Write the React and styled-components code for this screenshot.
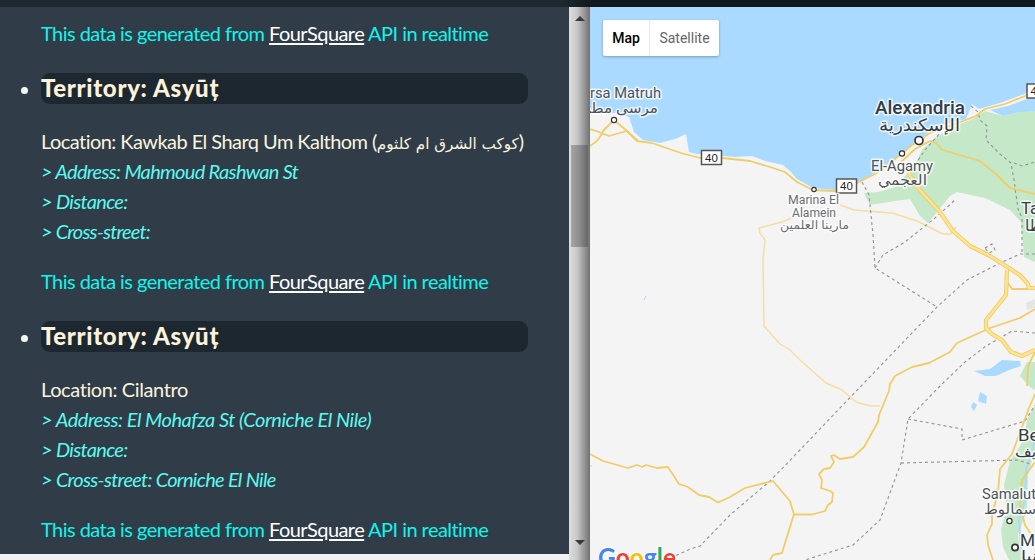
import React from "react";
import styled, { createGlobalStyle } from "styled-components";

const Global = createGlobalStyle`
  body { margin: 0; background: #f1f1f1; overflow: hidden; }
  * { box-sizing: border-box; }
`;
const Page = styled.div`
  width: 1035px; height: 560px; display: flex; flex-direction: column; overflow: hidden;
  font: 20px/30px "Gill Sans MT", "Gill Sans", Lato, "DejaVu Sans", sans-serif;
  font-variant-ligatures: none;
`;
const Header = styled.header`
  flex: 0 0 7px; background: linear-gradient(90deg, #1d2830 0 560px, #10171d 595px);
`;
const Main = styled.main` display: flex; height: 553px; `;
const Panel = styled.section`
  width: 569px; height: 547px; overflow: hidden; background: #303c48; color: #faf4df;
`;
const List = styled.ul` margin: 0; padding: 11px 41px 0; `;
const Item = styled.li`
  font-size: 20px;
  &::marker { color: #f5fbf5; }
`;
const Title = styled.h2`
  margin: 0 0 22px; height: 31px; border-radius: 9px; background: #1d272f; color: #fdf3da;
  font-size: 24px; line-height: 29px; font-weight: 900; letter-spacing: 0.68px; white-space: nowrap;
`;
const Line = styled.div`
  height: 30px; white-space: nowrap; letter-spacing: ${(p) => p.$ls || -0.55}px;
  color: ${(p) => (p.$detail ? "#5cf9f0" : "#faf4df")};
  font-style: ${(p) => (p.$detail ? "italic" : "normal")};
`;
const Source = styled.p`
  margin: ${(p) => (p.$first ? "0 0 25px" : "20px 0 25px")}; height: 30px; white-space: nowrap; color: #12f4ea;
  letter-spacing: -0.55px;
`;
const Link = styled.a` color: #fff; text-decoration: underline; text-underline-offset: 2px; `;
const Arabic = styled.span` font-family: "DejaVu Sans", sans-serif; font-size: 15.2px; letter-spacing: 0; `;
const Scrollbar = styled.div`
  width: 21px; height: 553px; display: flex; flex-direction: column; align-items: center;
  background: linear-gradient(90deg, #dedede 0, #c9c9c9 8px, #999 15px, #707070 21px);
`;
const Arrow = styled.div`
  width: 0; height: 0; border: 5px solid transparent; border-top-width: 0; border-bottom: 5px solid #383838;
  margin-top: 9px; transform: ${(p) => (p.$down ? "rotate(180deg)" : "none")};
`;
const Thumb = styled.div`
  width: 17px; height: 102px; margin: 124px 0 284px;
  background: linear-gradient(90deg, #a5a5a5, #8b8b8b 9px, #666);
`;
const MapArea = styled.section` position: relative; width: 445px; height: 553px; overflow: hidden; background: #f4f4f4; `;
const MapDrawing = styled.svg` display: block; `;
const MapTypes = styled.div`
  position: absolute; left: 13px; top: 13px; display: flex; width: 116px; height: 36px; background: #fff;
  border-radius: 2px; box-shadow: 0 1px 3px rgba(0,0,0,.28);
`;
const TypeButton = styled.button`
  width: ${(p) => p.$w}px; padding: 0; border: 0; border-right: ${(p) => (p.$active ? "1px solid #e9e9e9" : "0")};
  background: none; color: ${(p) => (p.$active ? "#000" : "#666")};
  font: ${(p) => (p.$active ? 500 : 400)} 14px/36px Roboto, sans-serif;
`;

const Label = ({ x, y, w, size, weight = 400, color = "#4d5357", children }) => (
  <text x={x} y={y} textLength={w} lengthAdjust="spacingAndGlyphs" fontSize={size} fontWeight={weight} fill={color}
    stroke="#fff" strokeOpacity=".8" strokeWidth="3" strokeLinejoin="round" paintOrder="stroke">{children}</text>
);
const Shield = ({ x, y, children }) => (
  <g><rect x={x} y={y} width="20" height="14" fill="#fff" stroke="#555" strokeWidth="1.5" />
    <text x={x + 3.6} y={y + 11.2} fontSize="11.5" fill="#222" fontFamily='"Liberation Sans", sans-serif'>{children}</text></g>
);
const Town = ({ x, y, r = 2.6 }) => <circle cx={x} cy={y} r={r} fill="#fff" stroke="#333" strokeWidth={r > 3 ? 1.7 : 1.2} />;

const roads = [
  "M590 129L596 131 609 136 627 131 637 141 652 143 681 153 700 158 722 158 750 161 770 167 785 172 797 182 813 190 835 191 855 184 875 174 895 159 912 145 930 133 958 123 976 116 985 109 1005 104 1035 92",
  "M590 146Q600 140 603 131L614 120 627 131 638 141",
  "M900 163L915 149 930 141 936 143 942 150 960 155 980 161 996 174 1010 188 1035 194",
  "M590 454L603 461 628 468 637 465 642 467 646 465 657 468 668 467 679 484 688 487 699 495 709 497 718 502.5 730 497 745 488 773 481 790 501 794 514.5 812 514.5 825 511 828 505 832 502 833 493 830 491 821 488 822 480 819 474 824 469 830 468 834 462 831 456 834 455 840 459 853 457 864 447 878 422 879 415 889 391 890 384 895 376 912 367 929 363 950 352 957 343 990 328 1020 318 1035 309",
  "M794 514L782 553 773 555 770 560",
  "M1008 283L1012 289 1035 289",
  "M1035 352L1028 366 1027 386",
  "M1035 394L1029 408 1012 454 1000 469 998 492 992 515 992 524 987 535 988 545 993 560",
  "M1035 462L1022 480 1020 505 1025 525 1035 540",
];
const highways = [
  "M908 172L917 187 940 212 953 231 970 246 990 256 1009 268 1020 275 1028 284 1029 288 1035 288",
  "M1007 270L1006 295 986 320 986 328 992 334 1002 340 1011 352 1022 356 1035 350",
];
const minor = [
  "M808 198L800 214 782 222 759 228 760 233 765 240 763 260 764 326 780 344 789 349 800 360 826 383 842 390 856 402 870 406 880 406",
  "M840 205L854 210 892 213 917 221 943 234 951 234 956 227",
];
const borders = [
  "M862 182L869 195 873 235 875 268 937 307",
  "M875 268L883 255 905 242 935 218 955 200",
  "M915 165L925 150 940 133",
  "M1035 254L1020 254 1000 263 967 280 937 307 839 409 800 450 770 481 730 515 700 546 690 549 675 556",
  "M1035 333L1012 331 986 346 965 362 940 386 908 419 901 463 880 520 853 545 805 560",
  "M908 419L962 429 962 440 1025 421 1035 405",
  "M901 463L1018 460 1030 464",
  "M971 106L978 112 980 120 987 126 986 140 1000 154 1011 163 1014 180 1018 209 1022 218 1022 254",
  "M1014 163L1022 166 1035 162",
  "M985 248L992 244 995 250 989 253Z",
];

const MapView = () => (
  <MapDrawing width="445" height="553" viewBox="590 7 445 553" fontFamily='Roboto, "DejaVu Sans", sans-serif' fill="none">
    <path fill="#aadaff" d="M590 7H1035V90L1000 103 979 109 972 104 966 119 940 126 922 137 905 151 888 163 870 176 857 184 835 190 813 188 797 179 790 171 783 165 765 161 752 156 735 157 697 154 689 152 686 134 675 139 660 143 643 140 634 132 629 117 615 113 590 113Z" />
    <path fill="#c5e8c9" d="M985 111L1003 116 1020 112 1035 108V262L1024 257 1021 222 1010 210 985 198 957 192 950 196 928 223 920 216 910 199 895 201 870 205 864 193 878 192 895 187 903 178 915 165 922 150 935 138 955 126 975 118Z" />
    <path fill="#aadaff" d="M990 110L1008 106 1035 96V111L1020 112 1003 116Z" />
    <path fill="#c5e8c9" d="M1035 362L1027 362 1020 376 1030 387 1035 390ZM1035 405L1027 420 1024 440 1010 461 1004 485 1006 510 1001 530 1003 547 1009 560H1021L1018 535 1027 510 1028 475 1035 450Z" />
    <path fill="#aadaff" d="M974 371L990 369 1002 360 1020 361 1021 366 1009 370 996 376 985 376ZM980 392L987 396 986 404 978 401ZM973 402L977 405 974 411 971 407Z" />
    <path fill="#e5e5e5" d="M1026 303L1035 299V308L1027 310Z" />
    <path stroke="#aadaff" strokeWidth="2" d="M1035 440L1026 470 1025 500 1019 520 1022 560" />
    <path stroke="#aadaff" d="M644 300L646 296M590 466H592" />
    {minor.map((d) => <path key={d} d={d} stroke="#f6dda0" strokeWidth="1.4" strokeLinejoin="round" />)}
    {borders.map((d) => <path key={d} d={d} stroke="#929297" strokeWidth="1.1" strokeDasharray="3 3" />)}
    {roads.map((d) => <path key={d} d={d} stroke="#f0cd67" strokeWidth="1.8" strokeLinejoin="round" />)}
    {highways.map((d) => <g key={d}><path d={d} stroke="#edcc68" strokeWidth="4.2" strokeLinejoin="round" /><path d={d} stroke="#ffe48f" strokeWidth="2.5" strokeLinejoin="round" /></g>)}
    <Shield x={701.5} y={150.5}>40</Shield><Shield x={836.5} y={179}>40</Shield><Shield x={1027} y={84}>4</Shield>
    <Label x={590} y={98} w={71} size={14}>rsa Matruh</Label>
    <Label x={566} y={113} w={92} size={15}>مرسى مطروح</Label>
    <Label x={875} y={114} w={90} size={18} weight={500} color="#343c3f">Alexandria</Label>
    <Label x={879} y={131} w={81} size={17} color="#343c3f">الإسكندرية</Label>
    <Label x={871} y={171} w={62} size={14}>El-Agamy</Label>
    <Label x={878} y={185} w={49} size={14}>العجمي</Label>
    <Label x={788} y={204} w={51} size={12} color="#6b6e70">Marina El</Label>
    <Label x={792} y={216.5} w={44} size={12} color="#6b6e70">Alamein</Label>
    <Label x={780} y={229} w={69} size={12} color="#6b6e70">مارينا العلمين</Label>
    <Label x={1021} y={214} w={42} size={17} color="#343c3f">Tanta</Label>
    <Label x={1025} y={231} w={34} size={16} color="#343c3f">طنطا</Label>
    <Label x={1018} y={441} w={78} size={17} color="#343c3f">Beni Suef</Label>
    <Label x={1015} y={457} w={70} size={15} color="#343c3f">بني سويف</Label>
    <Label x={982} y={499} w={54} size={14}>Samalut</Label>
    <Label x={984} y={514} w={52} size={14}>سمالوط</Label>
    <Label x={1020} y={546} w={46} size={17} color="#343c3f">Minya</Label>
    <Label x={1021} y={561} w={38} size={15} color="#343c3f">المنيا</Label>
    <Town x={614} y={120} /><Town x={919} y={140.5} r={4} /><Town x={902} y={153.5} /><Town x={814} y={189.5} r={2.2} /><Town x={1009.5} y={521} /><Town x={1015} y={547.5} r={3.1} />
    <text x="598" y="567" fontSize="26" fontFamily="Lato, sans-serif" fontWeight="700" textLength="78" lengthAdjust="spacingAndGlyphs" stroke="#fff" strokeWidth="2" paintOrder="stroke">
      <tspan fill="#4285f4">G</tspan><tspan fill="#ea4335">o</tspan><tspan fill="#fbbc05">o</tspan><tspan fill="#4285f4">g</tspan><tspan fill="#34a853">l</tspan><tspan fill="#ea4335">e</tspan>
    </text>
  </MapDrawing>
);

const Credit = ({ first }) => <Source $first={first}>This data is generated from <Link>FourSquare</Link> API in realtime</Source>;

export default function App() {
  return (
    <Page>
      <Global />
      <Header />
      <Main>
        <Panel>
          <List>
            <Credit first />
            <Item>
              <Title>Territory: Asyūț</Title>
              <Line>Location: Kawkab El Sharq Um Kalthom (<Arabic>كوكب الشرق ام كلثوم</Arabic>)</Line>
              <Line $detail $ls={-0.69}>&gt; Address: Mahmoud Rashwan St</Line>
              <Line $detail $ls={-0.68}>&gt; Distance:</Line>
              <Line $detail $ls={-0.82}>&gt; Cross-street:</Line>
              <Credit />
            </Item>
            <Item>
              <Title>Territory: Asyūț</Title>
              <Line $ls={-0.4}>Location: Cilantro</Line>
              <Line $detail $ls={-0.48}>&gt; Address: El Mohafza St (Corniche El Nile)</Line>
              <Line $detail $ls={-0.68}>&gt; Distance:</Line>
              <Line $detail $ls={-0.7}>&gt; Cross-street: Corniche El Nile</Line>
              <Credit />
            </Item>
          </List>
        </Panel>
        <Scrollbar><Arrow /><Thumb /><Arrow $down /></Scrollbar>
        <MapArea>
          <MapView />
          <MapTypes><TypeButton $active $w={47}>Map</TypeButton><TypeButton $w={69}>Satellite</TypeButton></MapTypes>
        </MapArea>
      </Main>
    </Page>
  );
}
